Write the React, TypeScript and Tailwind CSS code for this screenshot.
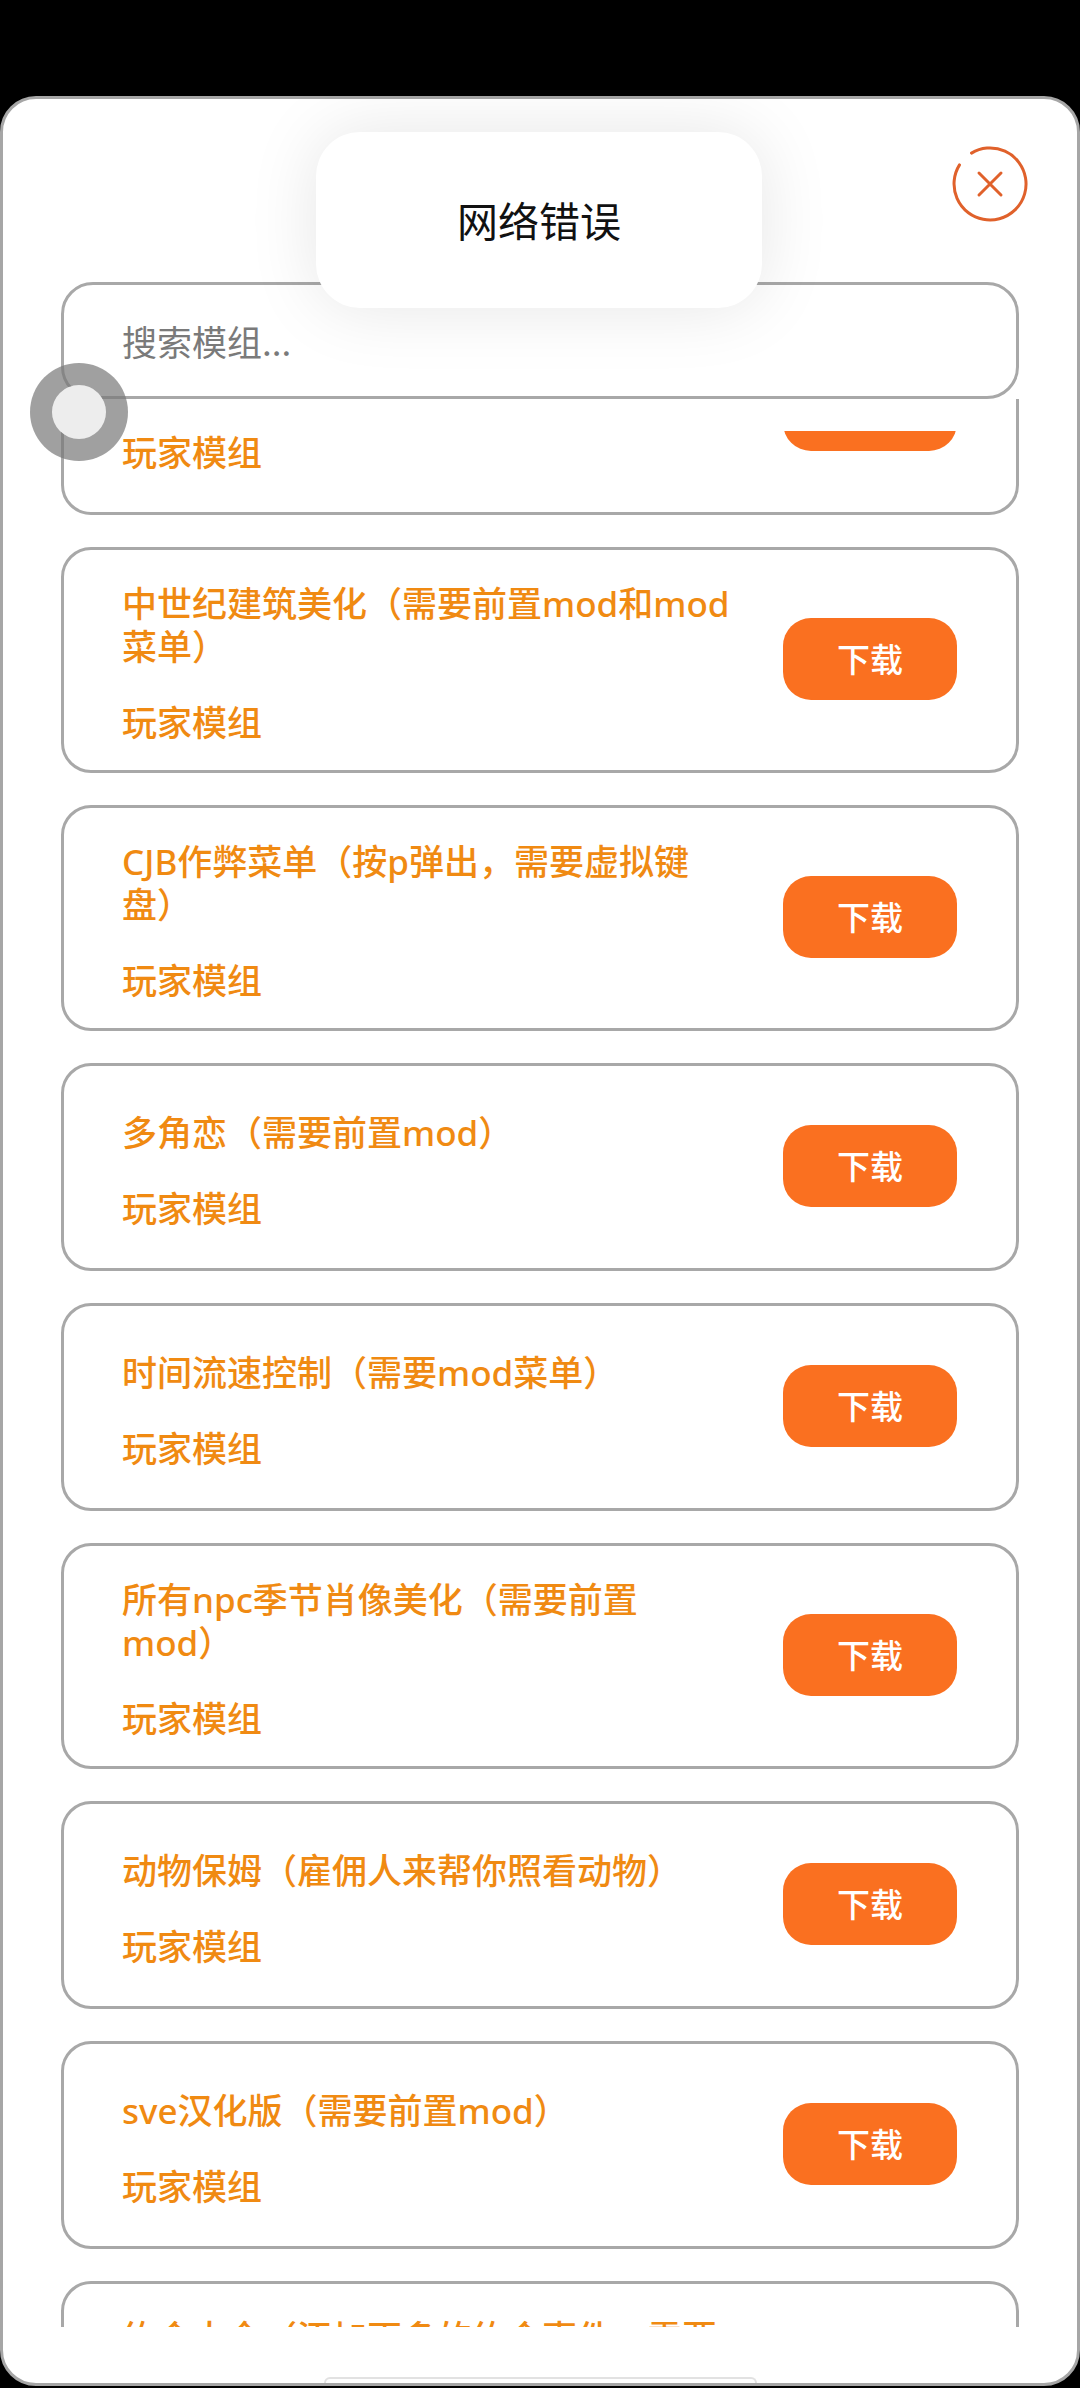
import React from "react";

type Mod = { lines: string[] };

const mods: Mod[] = [
  { lines: ["星露谷UI美化（需要前置mod）"] },
  { lines: ["中世纪建筑美化（需要前置mod和mod", "菜单）"] },
  { lines: ["CJB作弊菜单（按p弹出，需要虚拟键", "盘）"] },
  { lines: ["多角恋（需要前置mod）"] },
  { lines: ["时间流速控制（需要mod菜单）"] },
  { lines: ["所有npc季节肖像美化（需要前置", "mod）"] },
  { lines: ["动物保姆（雇佣人来帮你照看动物）"] },
  { lines: ["sve汉化版（需要前置mod）"] },
  { lines: ["约会大全（添加更多的约会事件，需要", "前置mod）"] },
];

function CloseIcon() {
  return (
    <svg width="76" height="76" viewBox="0 0 76 76" fill="none">
      <path
        d="M19.5 7.1 A36 36 0 1 1 7.5 18.9"
        stroke="#e0612b"
        strokeWidth="3"
        strokeLinecap="round"
      />
      <path d="M27 27 L49 49 M49 27 L27 49" stroke="#e0612b" strokeWidth="3" strokeLinecap="round" />
    </svg>
  );
}

function ModCard({ mod }: { mod: Mod }) {
  return (
    <div className="flex min-h-[208px] items-center gap-[32px] rounded-[30px] border-[3px] border-[#a8a8a8] bg-white pl-[58px] pr-[59px] pt-[32px] pb-[26px]">
      <div className="min-w-0 flex-1 font-['Noto_Sans','Noto_Sans_CJK_SC',sans-serif] text-[35px] font-medium leading-[43px] text-[#f08a12]">
        {mod.lines.map((l) => (
          <div key={l} className="whitespace-nowrap">
            {l}
          </div>
        ))}
        <div className="mt-[33px]">玩家模组</div>
      </div>
      <button className="mb-[8px] h-[82px] w-[174px] shrink-0 rounded-[28px] bg-[#fa7020] text-[33px] font-medium text-white">
        下载
      </button>
    </div>
  );
}

export default function App() {
  return (
    <div className="relative h-[2388px] w-[1080px] overflow-hidden bg-black pt-[96px] font-['Noto_Sans_CJK_SC','Noto_Sans',sans-serif]">
      <div className="flex h-[2290px] flex-col rounded-[36px] border-[3px] border-[#a6a6a6] bg-white">
        {/* header */}
        <div className="flex justify-end pr-[49px] pt-[47px]">
          <button className="h-[76px] w-[76px]">
            <CloseIcon />
          </button>
        </div>

        {/* search */}
        <div className="mt-[60px] px-[58px]">
          <input
            readOnly
            placeholder="搜索模组..."
            className="h-[117px] w-full rounded-[32px] border-[3px] border-[#a8a8a8] bg-white px-[58px] text-[35px] text-[#333] outline-none placeholder:text-[#7a7a7a]"
          />
        </div>

        {/* list */}
        <div className="relative h-[1928px] overflow-hidden px-[58px]">
          <div className="-mt-[92px] flex flex-col gap-[32px]">
            {mods.map((m, i) => (
              <ModCard key={i} mod={m} />
            ))}
          </div>
          <div className="absolute left-[61px] right-[61px] top-0 h-[32px] bg-white" />
        </div>

        <div className="flex flex-1 items-end justify-center">
          <div className="h-[6px] w-[433px] rounded-t-[8px] border-x-2 border-t-2 border-[#e2e2e2]" />
        </div>
      </div>

      {/* toast */}
      <div className="absolute left-[316px] top-[132px] z-30 flex h-[176px] w-[446px] items-center justify-center rounded-[44px] bg-white text-[41px] text-[#111] shadow-[0_0_70px_rgba(0,0,0,0.10)]">
        网络错误
      </div>

      {/* touch indicator */}
      <div className="absolute left-[30px] top-[363px] z-20 h-[98px] w-[98px] rounded-full border-[22px] border-[rgba(120,120,120,0.7)] bg-[#ededed] bg-clip-padding" />
    </div>
  );
}
